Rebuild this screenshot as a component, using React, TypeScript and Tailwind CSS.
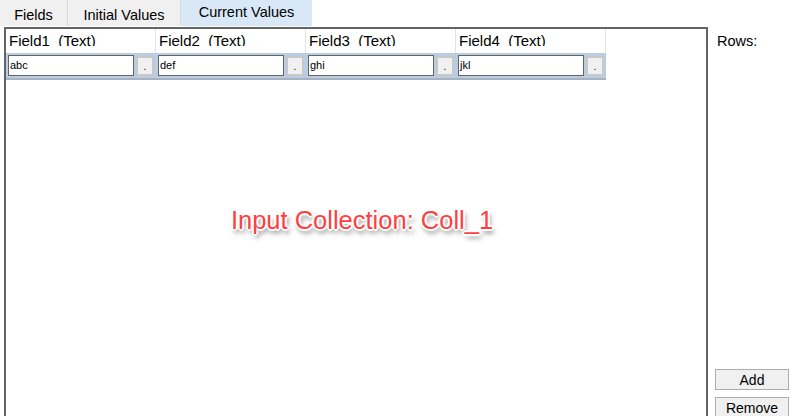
import React from "react";

const columns = [
  { name: "Field1", type: "Text", value: "abc" },
  { name: "Field2", type: "Text", value: "def" },
  { name: "Field3", type: "Text", value: "ghi" },
  { name: "Field4", type: "Text", value: "jkl" },
];

const tabs = ["Fields", "Initial Values", "Current Values"];

export default function App() {
  return (
    <div
      className="w-[799px] h-[416px] bg-white overflow-hidden flex flex-col text-[14.5px] text-black"
      style={{ fontFamily: '"Liberation Sans", Arial, sans-serif' }}
    >
      {/* Tab strip */}
      <div className="flex h-[27px] shrink-0">
        <div className="w-[68px] h-[26px] bg-[#f0f0f0] border-r border-[#d9d9d9] flex items-end justify-center leading-[20px] pb-[1px]">
          {tabs[0]}
        </div>
        <div className="w-[113px] h-[26px] bg-[#f0f0f0] border-r border-[#d9d9d9] flex items-end justify-center leading-[20px] pb-[1px]">
          {tabs[1]}
        </div>
        <div className="w-[131px] h-[26px] bg-[#d9e8f7] flex items-end justify-center leading-[20px] pb-[4px]">
          {tabs[2]}
        </div>
      </div>

      <div className="flex flex-1 min-h-0">
        {/* Grid panel */}
        <div className="ml-[4px] w-[704px] border-t-2 border-l-2 border-r-2 border-[#646464] flex-1 relative">
          <div className="flex h-[24px]">
            {columns.map((c) => (
              <div key={c.name} className="w-[150px] h-[24px] border-r border-[#e3e3e3] pl-[3px] pt-[3px]">
                <div className="h-[14px] overflow-hidden leading-[18px] whitespace-pre text-[15px]">
                  {c.name}  ({c.type})
                </div>
              </div>
            ))}
          </div>
          <div className="flex h-[27px] w-[600px] bg-[#b9cde5] border-b-2 border-[#a8b3c0]">
            {columns.map((c) => (
              <div key={c.name} className="w-[150px] flex items-center pl-[2px] gap-[2px]">
                <div className="w-[126px] h-[21px] bg-white border border-[#646464] flex items-center pl-[1px] text-[11px]">
                  {c.value}
                </div>
                <div className="w-[18px] h-[20px] bg-[#f0f0f0] border-2 border-[#c8c8c8] flex items-end justify-center text-[10px] leading-[12px] pb-[1px]">
                  .
                </div>
              </div>
            ))}
          </div>

          <div className="absolute left-0 right-0 top-[172px] flex justify-center pl-[12px]">
            <span
              className="text-[25.5px] text-[#ff4040]"
              style={{
                textShadow:
                  "1px 1px 0 #fff, -1px -1px 0 #fff, 1px -1px 0 #fff, -1px 1px 0 #fff, 0 2px 0 #fff, 0 -2px 0 #fff, 2px 0 0 #fff, -2px 0 0 #fff, 2px 4px 5px rgba(0,0,0,0.6)",
              }}
            >
              Input Collection: Coll_1
            </span>
          </div>
        </div>

        {/* Side panel */}
        <div className="w-[91px] flex flex-col pl-[9px] pt-[4px]">
          <div>Rows:</div>
          <div className="flex-1" />
          <button className="w-[74px] h-[21px] bg-[#f0f0f0] border border-[#adadad] ml-[-2px] leading-[18px] text-[14px]">
            Add
          </button>
          <button className="w-[74px] h-[21px] bg-[#f0f0f0] border border-[#adadad] ml-[-2px] mt-[7px] mb-[-2px] leading-[18px] text-[14px]">
            Remove
          </button>
        </div>
      </div>
    </div>
  );
}
